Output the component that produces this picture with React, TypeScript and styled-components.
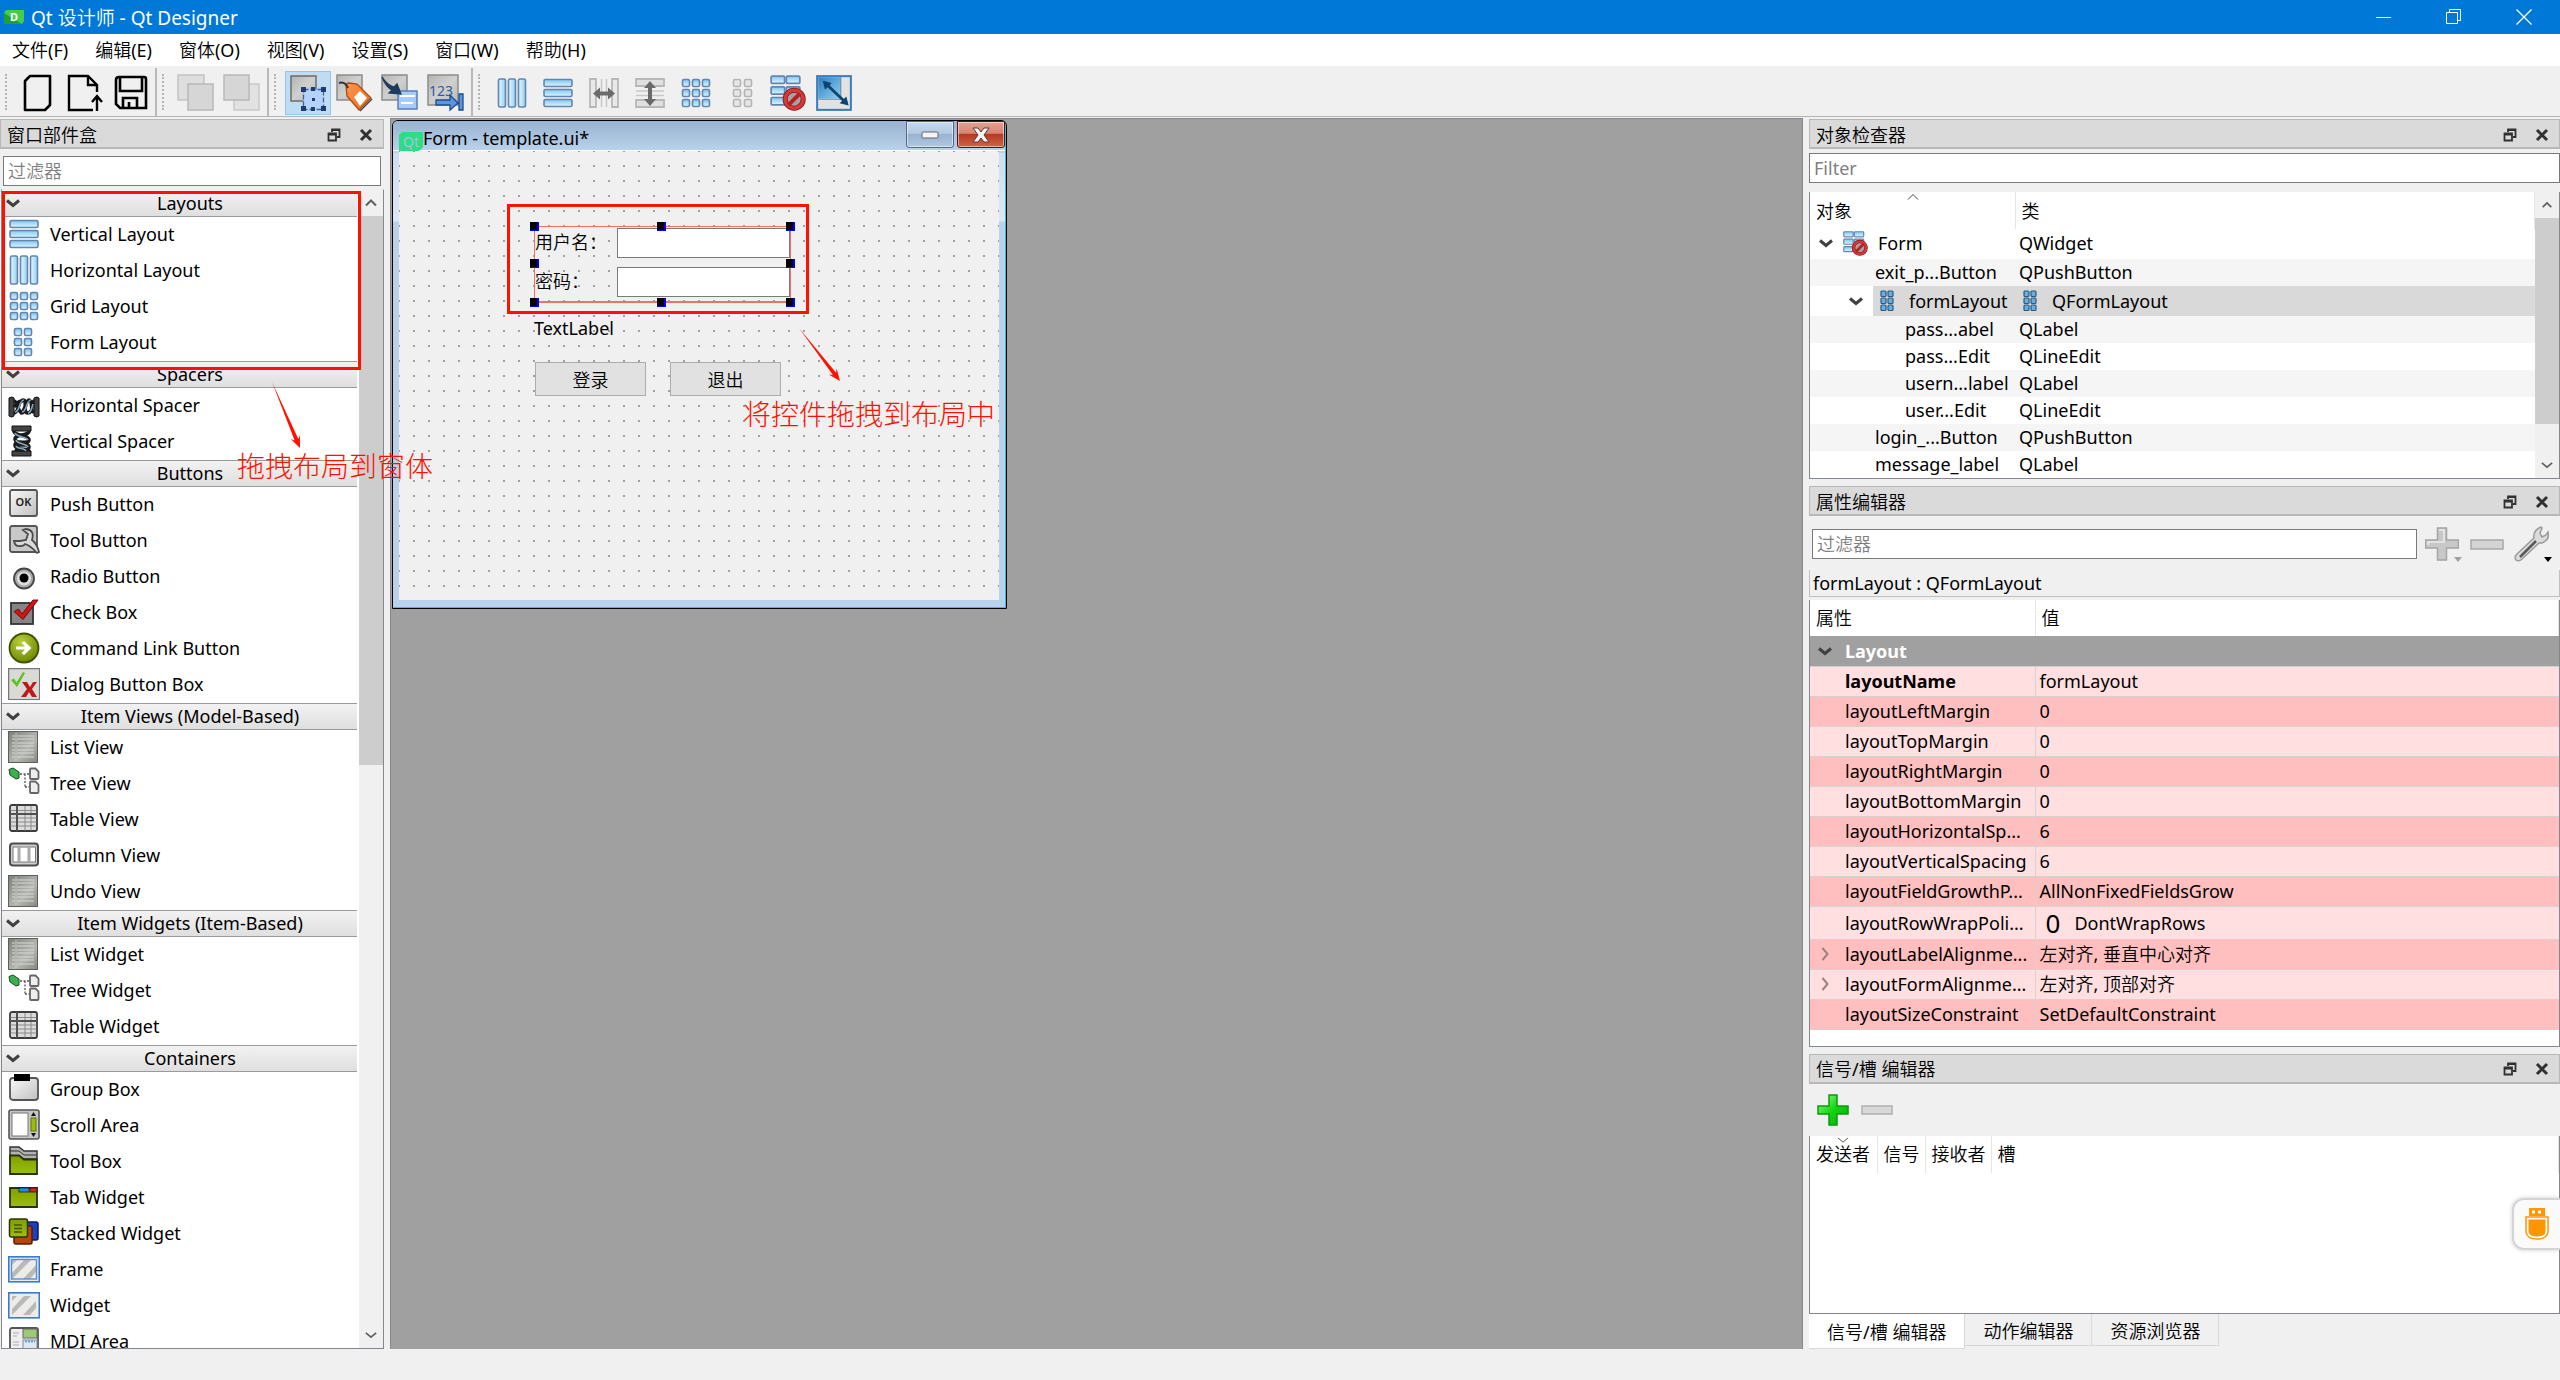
import React from "react";
import styled, { createGlobalStyle, css } from "styled-components";

const TEXT = 18;
const INK = "#000000";
const CHROME = "#f0f0f0";
const RED = "#ff1100";

const GlobalStyle = createGlobalStyle`
  *, *::before, *::after { box-sizing: border-box; }
  body { margin: 0; overflow: hidden; }
  body, button, input, table {
    font-family: "Noto Sans", "Noto Sans CJK SC DemiLight", "Noto Sans CJK SC", sans-serif;
    font-size: ${TEXT}px;
    color: ${INK};
  }
  button { padding: 0; border: 0; background: none; }
  ul { margin: 0; padding: 0; list-style: none; }
  svg { display: block; flex: none; }
`;

/* ---------- drawings ---------- */

const Hidden = styled.svg`
  position: absolute;
`;

const Gradients = () => (
  <Hidden width="0" height="0" aria-hidden="true">
    <defs>
      <linearGradient id="blueV" x1="0" y1="0" x2="0" y2="1">
        <stop offset="0" stopColor="#7cc8f2" /><stop offset="1" stopColor="#e0f4ff" />
      </linearGradient>
      <linearGradient id="blueH" x1="0" y1="0" x2="1" y2="0">
        <stop offset="0" stopColor="#e8f6fe" /><stop offset="1" stopColor="#8fd2f5" />
      </linearGradient>
      <linearGradient id="metal" x1="0" y1="0" x2="1" y2="1">
        <stop offset="0" stopColor="#b4b4b2" /><stop offset=".5" stopColor="#d0d0ce" /><stop offset="1" stopColor="#b8b8b6" />
      </linearGradient>
      <linearGradient id="pale" x1="0" y1="0" x2="1" y2="1">
        <stop offset="0" stopColor="#fafafa" /><stop offset="1" stopColor="#c0c0c0" />
      </linearGradient>
      <linearGradient id="listGrey" x1="0" y1="0" x2="1" y2="1">
        <stop offset="0" stopColor="#7c7f7a" /><stop offset=".6" stopColor="#b5b7b3" /><stop offset="1" stopColor="#858783" />
      </linearGradient>
      <linearGradient id="olive" x1="0" y1="0" x2="0" y2="1">
        <stop offset="0" stopColor="#7f9f00" /><stop offset="1" stopColor="#9cbd10" />
      </linearGradient>
      <radialGradient id="lime" cx=".4" cy=".3" r=".7">
        <stop offset="0" stopColor="#b9cf3a" /><stop offset="1" stopColor="#6f8a05" />
      </radialGradient>
      <linearGradient id="green" x1="0" y1="0" x2="1" y2="1">
        <stop offset="0" stopColor="#a0ff90" /><stop offset=".5" stopColor="#12d512" /><stop offset="1" stopColor="#06a806" />
      </linearGradient>
      <linearGradient id="orange" x1="0" y1="0" x2="1" y2="1">
        <stop offset="0" stopColor="#ff9650" /><stop offset="1" stopColor="#ec6a18" />
      </linearGradient>
      <linearGradient id="sky" x1="0" y1="0" x2="1" y2="1">
        <stop offset="0" stopColor="#2f7fc0" /><stop offset="1" stopColor="#8fd0f2" />
      </linearGradient>
    </defs>
  </Hidden>
);

const EDGE = "#6485ad";

const HBars = () => (
  <g fill="url(#blueV)" stroke={EDGE} strokeWidth="1.6">
    {[2.5, 12.5, 22.5].map((y) => <rect key={y} x="2" y={y} width="28" height="7" rx="1.500" />)}
  </g>
);
const VBars = () => (
  <g fill="url(#blueH)" stroke={EDGE} strokeWidth="1.6">
    {[2.5, 12.5, 22.5].map((x) => <rect key={x} x={x} y="2" width="7" height="28" rx="1.500" />)}
  </g>
);
const Cells = ({ xs, muted }: { xs: number[]; muted?: boolean }) => (
  <g fill={muted ? "#e6e6e6" : "url(#blueV)"} stroke={muted ? "#b4b4b4" : EDGE} strokeWidth="1.6">
    {xs.map((x) => [2.5, 12.5, 22.5].map((y) => <rect key={`${x}-${y}`} x={x} y={y} width="7" height="7" rx="1.500" />))}
  </g>
);
const ListArt = () => (
  <>
    <rect x=".5" y=".5" width="29" height="31" fill="url(#listGrey)" stroke="#5c5f5a" />
    {[5, 8, 12, 15, 19, 22, 26].map((y) => (
      <path key={y} d={`M4 ${y}h3M9 ${y}h17`} stroke="#d6d8d4" strokeWidth="1" />
    ))}
    <path d="M8 2v28" stroke="#c5c7c3" />
  </>
);
const TreeArt = () => (
  <>
    <path d="M1 2.500 5 1l6 4v6l-3 1-6-4z" fill="#3fae4e" stroke="#14501c" />
    <path d="M12 7h9M17 7v14M17 20h5" stroke="#555" strokeWidth="1.300" strokeDasharray="2 1.500" fill="none" />
    <path d="M22 2.500q0-1 1-1h4.500l3 3v6.500q0 1-1 1h-6.500q-1 0-1-1zM22 15.500q0-1 1-1h4.500l3 3v7.500q0 1-1 1h-6.500q-1 0-1-1z" fill="#eee" stroke="#666" strokeWidth="1.800" />
  </>
);
const TableArt = () => (
  <>
    <rect x="2" y="2" width="27" height="26" rx="2" fill="#dcdcdc" stroke="#3c3c3c" strokeWidth="1.800" />
    <path d="M2.500 7.500h26M2.500 15h26M2.500 19h26M2.500 23h26M17 3v24.500M23 3v24.500" stroke="#8a8a8a" />
    <path d="M9 2v26M2 11h27" stroke="#505050" strokeWidth="2" />
  </>
);
const HatchArt = ({ inner }: { inner: boolean }) => (
  <>
    <rect x=".8" y="3.800" width="30.500" height="25" fill="#ececea" stroke="#3a7bd0" strokeWidth="1.600" />
    <path d="M4 20 16 7h7L4 26zM15 26 28 12v7l-6 7zM4 12l5-5H4z" fill="#b9bab6" />
    {inner && <rect x="3.500" y="6.500" width="25" height="19.500" fill="none" stroke="#5b90d8" strokeWidth="1.400" />}
  </>
);

const art: Record<string, React.ReactNode> = {
  vlayout: <HBars />,
  hlayout: <VBars />,
  grid: <Cells xs={[2.5, 12.5, 22.5]} />,
  form: <Cells xs={[6.5, 16.5]} />,
  formMuted: <Cells xs={[7.5, 18.5]} muted />,
  hspacer: (
    <>
      <path d="M1 9q3-2 5 0v18q-2 2-5 0zM26 9q3-2 5 0v18q-2 2-5 0z" fill="#444" stroke="#111" />
      <path d="M6 24c5 0 4-13 9-13s-1 13 5 13 3-12 6-12M6 12c4 0 4 12 8 12s3-13 7-13 1 12 5 12M6 18c4-6 6-6 9-6M12 24c5 0 5-12 9-12" stroke="#1a1a1a" strokeWidth="3.500" fill="none" />
      <path d="M7 23c5 0 4-12 9-12M14 23c5 0 4-12 9-12M20 24c3 0 4-6 5-9" stroke="#7fa6bd" strokeWidth="1.600" fill="none" />
    </>
  ),
  vspacer: (
    <>
      <path d="M4 1h19v5H4zM4 26h19v5H4z" fill="#444" stroke="#111" />
      <path d="M6 6c0 5 15 4 15 9S7 14 7 20s14 3 14 6M21 6c0 5-14 3-14 8s14 3 14 8-13 1-13 4M8 10h10M8 20h11" stroke="#1a1a1a" strokeWidth="3.500" fill="none" />
      <path d="M7 8c1 4 12 4 13 7M8 15c1 4 11 4 12 7M8 21c1 3 9 2 10 5" stroke="#7fa6bd" strokeWidth="1.600" fill="none" />
    </>
  ),
  push: (
    <>
      <rect x="2" y="2" width="27" height="26" rx="2" fill="url(#pale)" stroke="#555" strokeWidth="1.800" />
      <text x="15.500" y="18" textAnchor="middle" fontSize="11" fontWeight="600" fill="#222">OK</text>
    </>
  ),
  tool: (
    <>
      <rect x="2" y="2" width="27" height="26" rx="2" fill="#c8c8c8" stroke="#555" strokeWidth="1.800" />
      <path d="M6 17q1 6 7 5 3 0 4-2 6 2 12 9l2-1q-2-8-7-12 3-10-6-11l-3 1 5 4-2 6-6 1z" fill="#dadada" stroke="#4c4c4c" strokeWidth="1.800" />
    </>
  ),
  radio: (
    <>
      <circle cx="16" cy="18.500" r="10" fill="#aaa" stroke="#444" strokeWidth="1.800" />
      <circle cx="16" cy="18.500" r="7" fill="#ddd" />
      <circle cx="16" cy="18" r="4.500" fill="#000" />
    </>
  ),
  check: (
    <>
      <rect x="3" y="7" width="22" height="21" fill="#858585" stroke="#333" strokeWidth="1.800" />
      <path d="M6 15.500 10.500 13l3.500 5L25 4l5 0-15 19.500z" fill="#d21414" stroke="#7a0808" />
    </>
  ),
  command: (
    <>
      <circle cx="16" cy="16" r="14.500" fill="url(#lime)" stroke="#3f5204" strokeWidth="1.800" />
      <path d="M8 14.500h9L13.500 11 16 9l7.500 7L16 23l-2.500-2 3.500-3.500H8z" fill="#fff" />
    </>
  ),
  dialog: (
    <>
      <rect x=".6" y=".6" width="31" height="31" fill="#d9dad6" stroke="#777" strokeWidth="1.300" />
      <path d="M3 12l3-1.500 2.500 4L15 4l2 1L9 19z" fill="#5cc21c" />
      <path d="M14 14h5l3 5 3-5h4l-5 7 5 8h-5l-3-5-3 5h-5l6-8z" fill="#c01818" />
    </>
  ),
  list: <ListArt />,
  tree: <TreeArt />,
  table: <TableArt />,
  column: (
    <>
      <rect x="2" y="4.500" width="28" height="22" rx="3" fill="#cfcfcf" stroke="#4c4c4c" strokeWidth="2" />
      <rect x="5" y="8" width="22.500" height="15" fill="#fff" stroke="#777" />
      <path d="M11 8v15M21 8v15" stroke="#aaa" strokeWidth="3" />
    </>
  ),
  group: (
    <>
      <rect x="2" y="5" width="28" height="22" rx="3" fill="url(#pale)" stroke="#555" strokeWidth="1.800" />
      <rect x="6" y="1" width="16" height="7" fill="#000" />
    </>
  ),
  scroll: (
    <>
      <rect x="1" y="1" width="30" height="29" rx="2" fill="#c6c6c6" stroke="#555" strokeWidth="1.600" />
      <rect x="4" y="4" width="16" height="23" fill="#fff" stroke="#777" />
      <path d="M25.500 3l2.500 4h-5zM25.500 28l2.500-4h-5z" fill="#111" />
      <rect x="23" y="9" width="5" height="13" fill="#9cbd10" stroke="#5c7404" />
    </>
  ),
  toolbox: (
    <>
      <path d="M2 2h9l5 4h13v8H2z" fill="#b2b2b2" stroke="#333" strokeWidth="1.500" />
      <path d="M2 6h9l5 4h13" stroke="#333" fill="none" />
      <path d="M2 10.500h9l5 4h13V29H2z" fill="url(#olive)" stroke="#2b3306" strokeWidth="1.800" />
    </>
  ),
  tab: (
    <>
      <path d="M2 7h27v19H2z" fill="url(#olive)" stroke="#2b3306" strokeWidth="1.800" />
      <rect x="11" y="7" width="10" height="4" fill="#1f8fe8" stroke="#123" strokeWidth=".8" />
      <rect x="22" y="7" width="7" height="4" fill="#e02020" stroke="#311" strokeWidth=".8" />
    </>
  ),
  stacked: (
    <>
      <rect x="17" y="5" width="13" height="18" rx="2" fill="#1c3fc4" stroke="#0c1d5c" strokeWidth="1.500" />
      <rect x="6" y="9" width="18" height="18" rx="2" fill="#b8430c" stroke="#5a1d02" strokeWidth="1.500" />
      <rect x="1.500" y="2" width="18" height="18" rx="2" fill="url(#olive)" stroke="#2b3306" strokeWidth="1.500" />
      <path d="M6 8h8M6 11.500h8M6 15h8" stroke="#42560a" strokeWidth="1.300" />
    </>
  ),
  frame: <HatchArt inner />,
  widget: <HatchArt inner={false} />,
  mdi: (
    <>
      <rect x="2" y="3" width="28" height="27" rx="2" fill="#efefef" stroke="#555" strokeWidth="1.800" />
      <rect x="15" y="4" width="14" height="9" fill="#9fc878" stroke="#666" />
      <rect x="15" y="15" width="14" height="14" fill="#dfe8f2" stroke="#7c8ca0" />
      <path d="M5 8h6M5 11h4M5 17h6M5 20h6" stroke="#aaa" />
      <path d="M17 16.500h10" stroke="#6c9cdc" strokeWidth="2" strokeDasharray="2 1" />
    </>
  ),
  broken: (
    <>
      <g fill="url(#blueV)" stroke={EDGE} strokeWidth="1.500">
        {[1, 14.5].map((x) => [1, 10.5, 20].map((y) => <rect key={`${x}-${y}`} x={x} y={y} width="12" height="6.5" rx="1" />))}
      </g>
      <circle cx="21.500" cy="21.500" r="8" fill="#a8a0a4" stroke="#8f1414" strokeWidth="4.500" />
      <circle cx="21.500" cy="21.500" r="8" fill="none" stroke="#d03a3a" strokeWidth="3" />
      <path d="M16.500 26.500l10-10" stroke="#b82020" strokeWidth="3.500" />
    </>
  ),
  newFile: <path d="M11 2h20v29l-5 5H6V7z" stroke="#000" strokeWidth="2.600" fill="none" strokeLinejoin="round" />,
  openFile: (
    <path d="M28 36H4V2h19l9 9v7M23 2v9h9M32 37V22M27 28l5-6 5 6" stroke="#000" strokeWidth="2.400" fill="none" />
  ),
  saveFile: (
    <path d="M8 3h25q2 0 2 2v29H9l-4-4V6q0-3 3-3zM9 4v13h22V4M12 34V24h14v10M18 34v-6" stroke="#000" strokeWidth="2.600" fill="none" />
  ),
  toBack: (
    <>
      <rect x="1" y="1" width="26" height="25" fill="#dedede" stroke="#c4c4c4" strokeWidth="1.500" />
      <rect x="11" y="10" width="25" height="26" fill="#d6d6d6" stroke="#b8b8b8" strokeWidth="1.500" />
    </>
  ),
  toFront: (
    <>
      <rect x="11" y="10" width="25" height="26" fill="#e2e2e2" stroke="#c8c8c8" strokeWidth="1.500" />
      <rect x="1" y="1" width="25" height="25" fill="#d6d6d6" stroke="#b8b8b8" strokeWidth="1.500" />
    </>
  ),
  editWidgets: (
    <>
      <rect x="2" y="2" width="25" height="25" fill="url(#metal)" stroke="#6c6c6c" strokeWidth="1.500" />
      <rect x="14.500" y="15.500" width="20" height="20" fill="#b4d2fb" stroke="#3c64a4" strokeWidth="1.300" strokeDasharray="5 2" />
      <path d="M12 13h5v5h-5zM22 13h4v4h-4zM32 13h5v5h-5zM12 32h5v5h-5zM22 33h4v4h-4zM32 32h5v5h-5zM23 24h3v3h-3z" fill="#1d3c74" />
    </>
  ),
  editSignals: (
    <>
      <rect x="2" y="1" width="25" height="25" fill="url(#metal)" stroke="#8c8c8c" strokeWidth="1.500" />
      <path d="M11 12q0-3 3-3l8 1 14 14-12 12-12-14z" fill="url(#orange)" stroke="#ac4c10" strokeWidth="1.300" />
      <path d="M19 23l6-6 7 7-7 8z" fill="#fff" />
      <path d="M4 9q6-2 9 5" stroke="#334" strokeWidth="2" fill="none" />
      <path d="M37 25 25 37" stroke="#404858" strokeWidth="1.500" />
    </>
  ),
  editBuddies: (
    <>
      <rect x="1" y="1" width="25" height="25" fill="url(#metal)" stroke="#8c8c8c" strokeWidth="1.500" />
      <rect x="17" y="17" width="19" height="18" fill="#a8cbfa" stroke="#5a7db8" strokeWidth="1.500" />
      <path d="M19 22h15M20 29h12" stroke="#fff" strokeWidth="2" />
      <path d="M1 3q5 8 12 10l3-3 4 10-12-1 3-3Q5 13 1 3z" fill="#1d3c5c" stroke="#1d3c5c" strokeWidth="1.300" />
    </>
  ),
  tabOrder: (
    <>
      <rect x="1" y="1" width="30" height="30" fill="url(#metal)" stroke="#8c8c8c" strokeWidth="1.500" />
      <text x="2" y="22" fontSize="14" fill="#2c5ca8">123</text>
      <path d="M9 26h14v-5l8 8-8 7v-5H9zM32 20h4v16h-4z" fill="#5c96e0" stroke="#1d4c8c" strokeWidth="1.300" />
    </>
  ),
  hsplit: (
    <>
      <path d="M2 2h6v28H2zM24 2h6v28h-6z" fill="#e8e8e8" stroke="#b8b8b8" strokeWidth="1.800" />
      <path d="M13.500 2v28M18.500 2v28" stroke="#c8c8c8" strokeWidth="1.500" />
      <path d="M5 16.500l7-6v4h8v-4l7 6-7 6v-4h-8v4z" fill="#6a6a6a" />
    </>
  ),
  vsplit: (
    <>
      <path d="M2 2h28v7H2zM2 23h28v7H2z" fill="#e0e0e0" stroke="#b8b8b8" strokeWidth="1.800" />
      <path d="M2 14h28M2 18.500h28" stroke="#c8c8c8" strokeWidth="1.500" />
      <path d="M16 4l6 7h-4v11h4l-6 7-6-7h4V11h-4z" fill="#6a6a6a" />
    </>
  ),
  adjust: (
    <>
      <rect x="1" y="1" width="30" height="30" fill="#e2e2e0" stroke="#3c7cbc" strokeWidth="1.800" />
      <path d="M2 2h20v19H2z" fill="url(#sky)" />
      <path d="M22 2v19.500H2" fill="none" stroke="#6c8ca8" />
      <path d="M9.500 8.500l16 15" stroke="#0c4470" strokeWidth="2.500" />
      <path d="M6 5l8 2-6 6zM29 27l-8-2 6-6z" fill="#0c4470" />
    </>
  ),
};

const Art = ({ name, size = 32, box = 32 }: { name: string; size?: number; box?: number }) => (
  <svg width={size} height={size} viewBox={`0 0 ${box} ${box}`} aria-hidden="true">{art[name]}</svg>
);

const Chevron = ({ dir, size = 14, color = "#404040", weight = 3 }: { dir: "up" | "down" | "right"; size?: number; color?: string; weight?: number }) => {
  const d = dir === "down" ? "M1 4.500 7 9.500 13 4.500" : dir === "up" ? "M2 9.500 7 4.500 12 9.500" : "M4.500 1 9.500 7 4.500 13";
  return (
    <svg width={size} height={size} viewBox="0 0 14 14" aria-hidden="true">
      <path d={d} stroke={color} strokeWidth={weight} fill="none" />
    </svg>
  );
};

/* ---------- application frame ---------- */

const Page = styled.div`
  position: relative;
  display: flex;
  flex-direction: column;
  height: 100vh;
  background: ${CHROME};
  overflow: hidden;
`;

const TitleBar = styled.header`
  display: flex;
  align-items: center;
  height: 34px;
  padding: 0 1px 0 4px;
  background: #0078d7;
  color: #fff;
  font-size: 19px;
`;
const TitleText = styled.span`
  flex: 1;
  padding-left: 7px;
`;
const WindowButton = styled.button`
  display: grid;
  place-items: center;
  width: 70px;
  height: 34px;
`;

const MenuBar = styled.nav`
  display: flex;
  gap: 7px;
  height: 34px;
  padding-left: 2px;
  background: #fff;
  border-bottom: 2px solid #f0f0f0;
`;
const MenuItem = styled.button`
  height: 32px;
  padding: 0 10px 2px;
`;

const ToolBars = styled.div`
  display: flex;
  height: 49px;
  border-bottom: 1px solid #b4b4b4;
`;
const ToolGroup = styled.div<{ $first?: boolean; $last?: boolean }>`
  position: relative;
  display: flex;
  align-items: center;
  padding: 2px 2px 0 ${(p) => (p.$first ? 15 : 16)}px;
  border-right: ${(p) => (p.$last ? "0" : "2px solid #b8b8b8")};
  &::before {
    content: "";
    position: absolute;
    left: 5px;
    top: 6px;
    bottom: 6px;
    border-left: 2px dotted #b4b4b4;
  }
`;
const ToolButton = styled.button<{ $on?: boolean }>`
  display: grid;
  place-items: center;
  width: 46px;
  height: 44px;
  ${(p) => p.$on && css`
    background: #c0dcf3;
    border: 1px solid #90c8f6;
  `}
`;

const Workspace = styled.div`
  flex: 1;
  min-height: 0;
  display: flex;
  gap: 6px;
  padding-top: 1px;
`;
const StatusBar = styled.footer`
  height: 31px;
`;

/* ---------- docks ---------- */

const DockColumn = styled.aside<{ $width: number }>`
  width: ${(p) => p.$width}px;
  flex: none;
  min-height: 0;
  display: flex;
  flex-direction: column;
  padding-top: 1px;
`;
const DockHead = styled.div`
  display: flex;
  align-items: center;
  flex: none;
  gap: 18px;
  height: 30px;
  padding: 2px 10px 0 6px;
  background: #dadada;
  border: 1px solid #b8b8b8;
  border-bottom-width: 2px;
`;
const DockTitle = styled.h2`
  flex: 1;
  margin: 0;
  font-size: ${TEXT}px;
  font-weight: 400;
  line-height: 26px;
`;
const DockButton = styled.button`
  width: 14px;
  height: 14px;
`;

const DockHeader = ({ title }: { title: string }) => (
  <DockHead>
    <DockTitle>{title}</DockTitle>
    <DockButton aria-label="浮动">
      <svg width="14" height="14" viewBox="0 0 14 14">
        <path d="M5 4V1.500h7.500V9H10M5 2h7.500" stroke="#303030" strokeWidth="1.800" fill="none" />
        <path d="M1.500 5.500H9v7H1.500zM1.500 6.500H9" stroke="#303030" strokeWidth="1.800" fill="none" />
      </svg>
    </DockButton>
    <DockButton aria-label="关闭">
      <svg width="14" height="14" viewBox="0 0 14 14">
        <path d="M2 2l10 10M12 2 2 12" stroke="#303030" strokeWidth="3" />
      </svg>
    </DockButton>
  </DockHead>
);

const TextBox = styled.input`
  width: 100%;
  min-width: 0;
  height: 30px;
  padding: 0 4px;
  border: 1px solid #7a7a7a;
  background: #fff;
  border-radius: 0;
  &::placeholder { color: #7f7f7f; opacity: 1; }
`;
const BoxPad = styled.div<{ $pad: string }>`
  display: flex;
  flex: none;
  padding: ${(p) => p.$pad};
`;

const ScrollTrack = styled.div<{ $width: number }>`
  display: flex;
  flex: none;
  flex-direction: column;
  align-items: center;
  width: ${(p) => p.$width}px;
  background: #f0f0f0;
`;
const ScrollArrow = styled.button`
  display: grid;
  place-items: center;
  flex: none;
  width: 100%;
  height: 26px;
`;
const ScrollThumb = styled.div<{ $share: string }>`
  width: 100%;
  height: ${(p) => p.$share};
  background: #cdcdcd;
`;
const Spring = styled.div`
  flex: 1;
`;

/* ---------- widget box ---------- */

const WidgetList = styled.div`
  flex: 1;
  min-height: 0;
  display: flex;
  margin-left: 1px;
  background: #fff;
  border: 1px solid #828790;
  border-top-color: #f0f0f0;
`;
const Sections = styled.div`
  flex: 1;
  min-width: 0;
  overflow: hidden;
  padding-right: 2px;
`;
const SectionHead = styled.button`
  display: flex;
  align-items: center;
  width: 100%;
  height: 27px;
  padding: 0 0 2px 4px;
  background: linear-gradient(#f2f2f2, #dfdfdf);
  border-top: 1px solid #9a9a9a;
  border-bottom: 1px solid #9a9a9a;
  section:first-child > & { border-top-color: #f0f0f0; }
`;
const SectionTitle = styled.span`
  flex: 1;
  padding-left: 3px;
  text-align: center;
  line-height: 24px;
`;
const WidgetItem = styled.li`
  display: flex;
  align-items: center;
  gap: 10px;
  height: 36px;
  padding: 0 0 2px 6px;
  line-height: 24px;
`;

const sections: { title: string; items: [string, string][] }[] = [
  { title: "Layouts", items: [["Vertical Layout", "vlayout"], ["Horizontal Layout", "hlayout"], ["Grid Layout", "grid"], ["Form Layout", "form"]] },
  { title: "Spacers", items: [["Horizontal Spacer", "hspacer"], ["Vertical Spacer", "vspacer"]] },
  { title: "Buttons", items: [["Push Button", "push"], ["Tool Button", "tool"], ["Radio Button", "radio"], ["Check Box", "check"], ["Command Link Button", "command"], ["Dialog Button Box", "dialog"]] },
  { title: "Item Views (Model-Based)", items: [["List View", "list"], ["Tree View", "tree"], ["Table View", "table"], ["Column View", "column"], ["Undo View", "list"]] },
  { title: "Item Widgets (Item-Based)", items: [["List Widget", "list"], ["Tree Widget", "tree"], ["Table Widget", "table"]] },
  { title: "Containers", items: [["Group Box", "group"], ["Scroll Area", "scroll"], ["Tool Box", "toolbox"], ["Tab Widget", "tab"], ["Stacked Widget", "stacked"], ["Frame", "frame"], ["Widget", "widget"], ["MDI Area", "mdi"]] },
];

const WidgetBox = () => (
  <DockColumn $width={384}>
    <DockHeader title="窗口部件盒" />
    <BoxPad $pad="7px 3px 3px 3px"><TextBox aria-label="过滤部件" placeholder="过滤器" /></BoxPad>
    <WidgetList>
      <Sections>
        {sections.map((s) => (
          <section key={s.title}>
            <SectionHead>
              <Chevron dir="down" />
              <SectionTitle>{s.title}</SectionTitle>
            </SectionHead>
            <ul>
              {s.items.map(([label, icon]) => (
                <WidgetItem key={label}><Art name={icon} />{label}</WidgetItem>
              ))}
            </ul>
          </section>
        ))}
      </Sections>
      <ScrollTrack $width={24}>
        <ScrollArrow aria-label="向上"><Chevron dir="up" weight={2} color="#606060" /></ScrollArrow>
        <ScrollThumb $share="47.400%" />
        <Spring />
        <ScrollArrow aria-label="向下"><Chevron dir="down" size={12} weight={2} color="#606060" /></ScrollArrow>
      </ScrollTrack>
    </WidgetList>
  </DockColumn>
);

/* ---------- form window on the desktop ---------- */

const Desktop = styled.main`
  position: relative;
  flex: 1;
  min-width: 0;
  background: #a0a0a0;
  border: 1px solid #828790;
  border-bottom: 0;
`;
const FormWindow = styled.section`
  position: absolute;
  left: 1px;
  top: 1px;
  width: 615px;
  padding: 0 7px 8px 6px;
  background: linear-gradient(#b9d1ea 0 32px, #cfdff0 32px, #dbe7f5 100px, #b9d1ea 101px);
  border: 1px solid #000;
  border-radius: 6px 6px 0 0;
  box-shadow: inset -1px -1px 0 #35c0dd;
`;
const FormTitle = styled.div`
  display: flex;
  align-items: flex-start;
  height: 30px;
  margin: 0 -6px;
  padding: 0 0 0 6px;
  background: linear-gradient(#99b4d1, #b9d1ea);
  border-bottom: 1px solid #fff;
  border-radius: 5px 5px 0 0;
`;
const FormName = styled.span`
  flex: 1;
  line-height: 34px;
`;
const FormIcon = styled.svg`
  margin-top: 11px;
`;
const CaptionButton = styled.button<{ $close?: boolean }>`
  display: grid;
  place-items: center;
  width: 48px;
  height: 27px;
  margin-left: 3px;
  border: 1px solid ${(p) => (p.$close ? "#5a1010" : "#50688c")};
  border-radius: 0 0 3px 3px;
  box-shadow: inset 0 0 0 1px rgba(255, 255, 255, 0.5);
  background: ${(p) => (p.$close
    ? "linear-gradient(#e5a090, #d88474 45%, #b83820 50%, #cc6448)"
    : "linear-gradient(#c6d8ea, #b4cae2 45%, #98b2d0 50%, #b0c8e2)")};
`;
const FormCanvas = styled.div`
  position: relative;
  height: 449px;
  background: conic-gradient(from 270deg at 2px 2px, #a0a0a0 90deg, #f0f0f0 0) -1px -1px / 15px 15px;
`;
const Placed = styled.div<{ $x: number; $y: number; $w?: number; $h?: number }>`
  position: absolute;
  left: ${(p) => p.$x}px;
  top: ${(p) => p.$y}px;
  width: ${(p) => (p.$w ? `${p.$w}px` : "auto")};
  height: ${(p) => (p.$h ? `${p.$h}px` : "auto")};
`;
const FormLayoutFrame = styled(Placed)`
  display: grid;
  grid-template-columns: 82px 1fr;
  row-gap: 9px;
  align-content: start;
  align-items: center;
  padding-top: 1px;
  border: 1px solid #f07070;
  border-bottom-width: 2px;
`;
const FieldLabel = styled.label`
  line-height: 26px;
  padding-bottom: 2px;
`;
const Handle = styled(Placed)`
  width: 9px;
  height: 9px;
  background: #000;
  border: solid #0000ff;
  border-width: 0 2px 1px 0;
`;
const FormButton = styled(Placed).attrs({ as: "button" })`
  background: #e1e1e1;
  border: 1px solid #adadad;
`;

const handles: [number, number][] = [
  [131, 71], [258, 71], [387, 71], [131, 108], [387, 108], [131, 147], [258, 147], [387, 147],
];

const DesignArea = () => (
  <Desktop>
    <FormWindow>
      <FormTitle>
        <FormIcon width="24" height="19" viewBox="0 0 24 19">
          <path d="M3 0h21v15l-4 4H0V3z" fill="#2bdd84" />
          <text x="12" y="15" fontSize="14" fill="#a9c4dc" textAnchor="middle">Qt</text>
        </FormIcon>
        <FormName>Form - template.ui*</FormName>
        <CaptionButton aria-label="最小化">
          <svg width="18" height="8"><rect x="1" y="1" width="16" height="6" rx="1" fill="#f4f4f4" stroke="#606870" /></svg>
        </CaptionButton>
        <CaptionButton $close aria-label="关闭">
          <svg width="18" height="16" viewBox="0 0 18 16">
            <path d="M1 1h5l3 4 3-4h5l-5 7 5 7h-5l-3-4-3 4H1l5-7z" fill="#f4f4f4" stroke="#603838" />
          </svg>
        </CaptionButton>
      </FormTitle>
      <FormCanvas>
        <FormLayoutFrame $x={135} $y={75} $w={257} $h={77}>
          <FieldLabel htmlFor="user">用户名：</FieldLabel>
          <TextBox id="user" />
          <FieldLabel htmlFor="pass">密码：</FieldLabel>
          <TextBox id="pass" type="password" />
        </FormLayoutFrame>
        {handles.map(([x, y]) => <Handle key={`${x}-${y}`} $x={x} $y={y} />)}
        <Placed $x={135} $y={165}>TextLabel</Placed>
        <FormButton $x={136} $y={211} $w={111} $h={34}>登录</FormButton>
        <FormButton $x={271} $y={211} $w={111} $h={34}>退出</FormButton>
      </FormCanvas>
    </FormWindow>
  </Desktop>
);

/* ---------- right docks ---------- */

const TreeFrame = styled.div`
  display: flex;
  flex: none;
  background: #fff;
  border: 1px solid #828790;
  border-top: 0;
  margin-bottom: 7px;
`;
const DataTable = styled.table`
  flex: 1;
  width: 100%;
  table-layout: fixed;
  border-collapse: collapse;
  align-self: flex-start;
  font-weight: 400;
  td, th { padding: 0; overflow: hidden; white-space: nowrap; text-align: left; }
`;
const Head = styled.th<{ $w?: number; $h: number }>`
  position: relative;
  width: ${(p) => (p.$w ? `${p.$w}px` : "auto")};
  height: ${(p) => p.$h}px;
  font-weight: 400;
  line-height: 24px;
  border-right: 1px solid #e5e5e5;
  && { padding-left: 6px; }
`;
const SortMark = styled.span`
  position: absolute;
  top: -2px;
  left: calc(50% - 6px);
`;
const TreeRow = styled.tr<{ $tall?: boolean; $alt?: boolean }>`
  height: ${(p) => (p.$tall ? 30 : 27)}px;
  line-height: 24px;
  background: ${(p) => (p.$alt ? "#f5f5f5" : "#fff")};
`;
const NodeCell = styled.div<{ $indent: number; $flush?: boolean }>`
  display: flex;
  align-items: center;
  gap: 10px;
  padding: 0 0 ${(p) => (p.$flush ? 0 : 2)}px ${(p) => p.$indent}px;
`;
const Picked = styled.div<{ $pad: number }>`
  display: flex;
  flex: 1;
  align-items: center;
  gap: 14px;
  height: 30px;
  padding-left: ${(p) => p.$pad}px;
  background: #d9d9d9;
`;
const ClassCell = styled.td`
  && { padding: 0 0 2px 4px; }
`;

const FormGlyph = () => (
  <svg width="15" height="22" viewBox="0 0 15 22" aria-hidden="true">
    {[1, 8].map((x) => [1, 8, 15].map((y) => (
      <rect key={`${x}${y}`} x={x} y={y} width="5" height="5.500" rx="1" fill="#62b0e4" stroke="#2e5880" strokeWidth="1.200" />
    )))}
  </svg>
);

const nodes: { name: string; cls: string; indent: number; alt?: boolean; kind?: "root" | "picked" }[] = [
  { name: "Form", cls: "QWidget", indent: 9, kind: "root" },
  { name: "exit_p...Button", cls: "QPushButton", indent: 65, alt: true },
  { name: "formLayout", cls: "QFormLayout", indent: 39, kind: "picked" },
  { name: "pass...abel", cls: "QLabel", indent: 95, alt: true },
  { name: "pass...Edit", cls: "QLineEdit", indent: 95 },
  { name: "usern...label", cls: "QLabel", indent: 95, alt: true },
  { name: "user...Edit", cls: "QLineEdit", indent: 95 },
  { name: "login_...Button", cls: "QPushButton", indent: 65, alt: true },
  { name: "message_label", cls: "QLabel", indent: 65 },
];

const ObjectInspector = () => (
  <>
    <DockHeader title="对象检查器" />
    <BoxPad $pad="4px 0 9px 0"><TextBox aria-label="Filter objects" placeholder="Filter" /></BoxPad>
    <TreeFrame>
      <DataTable>
        <thead>
          <tr>
            <Head $w={205} $h={37}>对象<SortMark><Chevron dir="up" weight={1} /></SortMark></Head>
            <Head $h={37}>类</Head>
          </tr>
        </thead>
        <tbody>
          {nodes.map((n, i) => (
            <TreeRow key={i} $tall={!!n.kind} $alt={n.alt}>
              <td>
                <NodeCell $indent={n.indent} $flush={n.kind === "picked"}>
                  {n.kind && <Chevron dir="down" />}
                  {n.kind === "root" && <Art name="broken" size={25} />}
                  {n.kind === "picked" ? <Picked $pad={7}><FormGlyph />{n.name}</Picked> : n.name}
                </NodeCell>
              </td>
              {n.kind === "picked"
                ? <td><Picked $pad={8}><FormGlyph />{n.cls}</Picked></td>
                : <ClassCell>{n.cls}</ClassCell>}
            </TreeRow>
          ))}
        </tbody>
      </DataTable>
      <ScrollTrack $width={24}>
        <ScrollArrow aria-label="向上"><Chevron dir="up" size={12} weight={2} color="#606060" /></ScrollArrow>
        <ScrollThumb $share="72%" />
        <Spring />
        <ScrollArrow aria-label="向下"><Chevron dir="down" size={12} weight={2} color="#606060" /></ScrollArrow>
      </ScrollTrack>
    </TreeFrame>
  </>
);

const FilterRow = styled.div`
  display: flex;
  align-items: center;
  gap: 5px;
  padding: 10px 8px 8px 3px;
`;
const PropTool = styled.button`
  position: relative;
  display: grid;
  place-items: center;
  flex: none;
  width: 40px;
  height: 36px;
`;
const DropMark = styled.span<{ $color: string }>`
  position: absolute;
  right: 0;
  bottom: 0;
  border: 4px solid transparent;
  border-top: 5px solid ${(p) => p.$color};
  border-bottom: 0;
`;
const PathLabel = styled.div`
  height: 27px;
  margin-bottom: 3px;
  padding-left: 3px;
  line-height: 26px;
  border: 1px solid #c0c0c0;
  border-top: 0;
`;
const PropFrame = styled(TreeFrame)`
  padding-bottom: 16px;
`;
const PropRow = styled.tr<{ $tone: "light" | "dark"; $tall?: boolean }>`
  height: ${(p) => (p.$tall ? 33 : 30)}px;
  line-height: 24px;
  background: ${(p) => (p.$tone === "dark" ? "#ffbfbf" : "#ffdfdf")};
  td { border-bottom: 1px solid #dccfcf; }
`;
const NameCell = styled.td<{ $bold?: boolean }>`
  border-right: 1px solid #dccfcf;
  font-weight: ${(p) => (p.$bold ? 700 : 400)};
`;
const NameWrap = styled.div`
  display: flex;
  align-items: center;
  padding-left: 35px;
`;
const Expander = styled.span`
  width: 27px;
  margin-left: -27px;
`;
const ValueCell = styled.td`
  && { padding-left: 4px; }
`;
const ValueWrap = styled.div`
  display: flex;
  align-items: center;
  gap: 14px;
  padding-left: 6px;
`;
const BigZero = styled.span`
  font-size: 26px;
`;
const GroupRow = styled.tr`
  height: 30px;
  background: #a0a0a0;
  color: #fff;
  font-weight: 700;
  line-height: 24px;
  border-bottom: 1px solid #d0d0d0;
`;

const props: { name: string; value: string; bold?: boolean; nested?: boolean; zero?: boolean }[] = [
  { name: "layoutName", value: "formLayout", bold: true },
  { name: "layoutLeftMargin", value: "0" },
  { name: "layoutTopMargin", value: "0" },
  { name: "layoutRightMargin", value: "0" },
  { name: "layoutBottomMargin", value: "0" },
  { name: "layoutHorizontalSp...", value: "6" },
  { name: "layoutVerticalSpacing", value: "6" },
  { name: "layoutFieldGrowthP...", value: "AllNonFixedFieldsGrow" },
  { name: "layoutRowWrapPoli...", value: "DontWrapRows", zero: true },
  { name: "layoutLabelAlignme...", value: "左对齐, 垂直中心对齐", nested: true },
  { name: "layoutFormAlignme...", value: "左对齐, 顶部对齐", nested: true },
  { name: "layoutSizeConstraint", value: "SetDefaultConstraint" },
];

const PropertyEditor = () => (
  <>
    <DockHeader title="属性编辑器" />
    <FilterRow>
      <TextBox aria-label="过滤属性" placeholder="过滤器" />
      <PropTool aria-label="添加动态属性">
        <svg width="34" height="34" viewBox="0 0 34 34">
          <path d="M12.500 1h9v12h12v8h-12v12h-9V21h-12v-8h12z" fill="#c8c8c8" stroke="#a4a4a4" strokeWidth="1.500" />
          <path d="M14 3h5v12H3v3" fill="none" stroke="#ececec" strokeWidth="1.500" />
        </svg>
        <DropMark $color="#a0a0a0" />
      </PropTool>
      <PropTool aria-label="删除动态属性">
        <svg width="34" height="11"><rect x="1" y="1" width="32" height="9" fill="#d4d4d4" stroke="#a8a8a8" strokeWidth="1.500" /></svg>
      </PropTool>
      <PropTool aria-label="配置属性编辑器">
        <svg width="36" height="36" viewBox="0 0 36 36">
          <path d="M20 12q-1-8 7-11l1 1-2 5 2 4 4-2 2-3q2 8-6 11l-3 0L8 33q-3 3-6 1-2-3 1-6z" fill="#dcdcdc" stroke="#9a9a9a" strokeWidth="1.500" />
          <path d="M22 15 6 31" stroke="#585858" strokeWidth="2.500" />
        </svg>
        <DropMark $color="#000" />
      </PropTool>
    </FilterRow>
    <PathLabel>formLayout : QFormLayout</PathLabel>
    <PropFrame>
      <DataTable>
        <thead>
          <tr><Head $w={225} $h={36}>属性</Head><Head $h={36}>值</Head></tr>
        </thead>
        <tbody>
          <GroupRow>
            <td colSpan={2}><NameWrap><Expander><Chevron dir="down" /></Expander>Layout</NameWrap></td>
          </GroupRow>
          {props.map((p, i) => (
            <PropRow key={p.name} $tone={i % 2 ? "dark" : "light"} $tall={p.zero}>
              <NameCell $bold={p.bold}>
                <NameWrap>
                  {p.nested && <Expander><Chevron dir="right" color="#a08080" weight={2} /></Expander>}
                  {p.name}
                </NameWrap>
              </NameCell>
              <ValueCell>
                {p.zero ? <ValueWrap><BigZero>0</BigZero>{p.value}</ValueWrap> : p.value}
              </ValueCell>
            </PropRow>
          ))}
        </tbody>
      </DataTable>
    </PropFrame>
  </>
);

const SignalTools = styled.div`
  display: flex;
  align-items: center;
  flex: none;
  gap: 12px;
  height: 52px;
  padding: 2px 8px 2px;
`;
const SignalFrame = styled.div`
  flex: 1;
  background: #fff;
  border: 1px solid #828790;
  border-top: 0;
`;
const Tabs = styled.div`
  display: flex;
  align-items: flex-start;
  flex: none;
  height: 35px;
`;
const Tab = styled.button<{ $on?: boolean }>`
  height: ${(p) => (p.$on ? 35 : 32)}px;
  padding: 0 18px;
  background: ${(p) => (p.$on ? "#fff" : CHROME)};
  border: 1px solid #d9d9d9;
  border-width: 0 1px 1px 0;
`;

const SignalEditor = () => (
  <>
    <DockHeader title="信号/槽 编辑器" />
    <SignalTools>
      <button aria-label="添加连接">
        <svg width="32" height="32" viewBox="0 0 32 32">
          <path d="M12 1h8v11h11v8H20v11h-8V20H1v-8h11z" fill="url(#green)" stroke="#0b9a0b" strokeWidth="1.500" />
        </svg>
      </button>
      <button aria-label="删除连接">
        <svg width="32" height="10"><rect x="1" y="1" width="30" height="8" fill="#d8d8d8" stroke="#b0b0b0" strokeWidth="1.500" /></svg>
      </button>
    </SignalTools>
    <SignalFrame>
      <DataTable>
        <thead>
          <tr>
            <Head $w={67} $h={37}>发送者<SortMark><Chevron dir="down" size={12} weight={1} /></SortMark></Head>
            <Head $w={48} $h={37}>信号</Head>
            <Head $w={66} $h={37}>接收者</Head>
            <Head $h={37}>槽</Head>
          </tr>
        </thead>
      </DataTable>
    </SignalFrame>
    <Tabs role="tablist">
      <Tab role="tab" $on aria-selected="true">信号/槽 编辑器</Tab>
      <Tab role="tab">动作编辑器</Tab>
      <Tab role="tab">资源浏览器</Tab>
    </Tabs>
  </>
);

/* ---------- notes laid over the page ---------- */

const NoteBox = styled(Placed)`
  border: 3px solid ${RED};
  pointer-events: none;
`;
const NoteText = styled(Placed)`
  color: ${RED};
  font-family: "Noto Sans CJK SC", sans-serif;
  font-size: 28px;
  font-weight: 300;
  line-height: 32px;
  white-space: nowrap;
`;
const UsbTab = styled.button`
  position: absolute;
  right: 0;
  top: 1198px;
  display: flex;
  align-items: center;
  width: 48px;
  height: 52px;
  padding-left: 11px;
  background: #fafafa;
  border: 2px solid #d4d4d4;
  border-right: 0;
  border-radius: 12px 0 0 12px;
  box-shadow: 0 0 4px rgba(0, 0, 0, 0.2);
`;

const Arrow = ({ w, h }: { w: number; h: number }) => {
  const len = Math.hypot(w, h);
  return (
    <svg width={w + 12} height={h + 12} viewBox={`-6 -6 ${w + 12} ${h + 12}`} aria-hidden="true">
      <g transform={`rotate(${(Math.atan2(h, w) * 180) / Math.PI})`} fill={RED}>
        <path d={`M0 0 L${len - 9} -2 L${len - 12} -5 L${len} 0 L${len - 12} 5 L${len - 9} 2 Z`} />
      </g>
    </svg>
  );
};

const toolGroups: { name: string; label: string; box: number }[][] = [
  [{ name: "newFile", label: "新建", box: 38 }, { name: "openFile", label: "打开", box: 38 }, { name: "saveFile", label: "保存", box: 38 }],
  [{ name: "toBack", label: "放到后面", box: 38 }, { name: "toFront", label: "放到前面", box: 38 }],
  [{ name: "editWidgets", label: "编辑窗口部件", box: 38 }, { name: "editSignals", label: "编辑信号/槽", box: 38 }, { name: "editBuddies", label: "编辑伙伴", box: 38 }, { name: "tabOrder", label: "编辑 Tab 顺序", box: 38 }],
  [
    { name: "hlayout", label: "水平布局", box: 32 }, { name: "vlayout", label: "垂直布局", box: 32 },
    { name: "hsplit", label: "使用分裂器水平布局", box: 32 }, { name: "vsplit", label: "使用分裂器垂直布局", box: 32 },
    { name: "grid", label: "栅格布局", box: 32 }, { name: "formMuted", label: "在窗体布局中布局", box: 32 },
    { name: "broken", label: "打破布局", box: 32 }, { name: "adjust", label: "调整大小", box: 32 },
  ],
];

const menus = ["文件(F)", "编辑(E)", "窗体(O)", "视图(V)", "设置(S)", "窗口(W)", "帮助(H)"];

export default function App() {
  return (
    <Page>
      <GlobalStyle />
      <Gradients />
      <TitleBar>
        <svg width="20" height="14" viewBox="0 0 20 14">
          <path d="M2 0h18v11l-2 3H0V3z" fill="#41cd52" />
          <path d="M0 3v11h18z" fill="#21a038" />
          <text x="10" y="11" fontSize="11" fontWeight="700" fill="#fff" textAnchor="middle">D</text>
        </svg>
        <TitleText>Qt 设计师 - Qt Designer</TitleText>
        <WindowButton aria-label="最小化"><svg width="16" height="16"><path d="M0 8.500h15" stroke="#fff" /></svg></WindowButton>
        <WindowButton aria-label="还原">
          <svg width="16" height="16"><path d="M.5 3.500h11v11H.5zM3.500 3V.5h11v11H12" stroke="#fff" fill="none" /></svg>
        </WindowButton>
        <WindowButton aria-label="关闭"><svg width="16" height="16"><path d="M.5.5l15 15M15.500.5l-15 15" stroke="#fff" strokeWidth="1.300" /></svg></WindowButton>
      </TitleBar>
      <MenuBar>{menus.map((m) => <MenuItem key={m}>{m}</MenuItem>)}</MenuBar>
      <ToolBars>
        {toolGroups.map((g, i) => (
          <ToolGroup key={i} $first={i === 0} $last={i === 3}>
            {g.map((t) => (
              <ToolButton key={t.name} aria-label={t.label} $on={t.name === "editWidgets"}>
                <Art name={t.name} size={t.name === "broken" || t.name === "adjust" ? 36 : t.box} box={t.box} />
              </ToolButton>
            ))}
          </ToolGroup>
        ))}
      </ToolBars>
      <Workspace>
        <WidgetBox />
        <DesignArea />
        <DockColumn $width={751}>
          <ObjectInspector />
          <PropertyEditor />
          <SignalEditor />
        </DockColumn>
      </Workspace>
      <StatusBar />

      <NoteBox $x={2} $y={191} $w={359} $h={179} />
      <Placed $x={266} $y={376}><Arrow w={28} h={66} /></Placed>
      <NoteText $x={237} $y={449}>拖拽布局到窗体</NoteText>
      <NoteBox $x={507} $y={204} $w={302} $h={110} />
      <Placed $x={793} $y={322}><Arrow w={41} h={53} /></Placed>
      <NoteText $x={743} $y={397}>将控件拖拽到布局中</NoteText>
      <UsbTab aria-label="U 盘">
        <svg width="24" height="32" viewBox="0 0 24 32">
          <path d="M4 0h16v8H4z" fill="#ff9500" />
          <path d="M7 4h3M13 4h3" stroke="#fff" strokeWidth="3" />
          <path d="M1 9h22v15q-1 7-11 7T1 24z" fill="#fff" stroke="#ff9500" strokeWidth="1.500" />
          <path d="M3.500 11.500h17V24q-1 4.500-8.500 4.500T3.500 24z" fill="#ff9500" />
        </svg>
      </UsbTab>
    </Page>
  );
}
